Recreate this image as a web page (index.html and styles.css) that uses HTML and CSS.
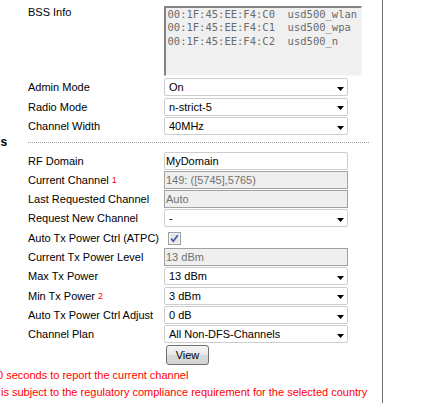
FILE: index.html
```html
<!DOCTYPE html>
<html>
<head>
<meta charset="utf-8">
<link rel="stylesheet" href="styles.css">
</head>
<body>
<div class="page">
  <div class="content">
    <div class="grid g1">
      <div class="lbl top">BSS Info</div>
      <div class="bss">00:1F:45:EE:F4:C0  usd500_wlan
00:1F:45:EE:F4:C1  usd500_wpa
00:1F:45:EE:F4:C2  usd500_n</div>
      <div class="lbl">Admin Mode</div>
      <div class="sel"><span>On</span><svg class="arr" width="7" height="4" viewBox="0 0 7 4"><path d="M0 0H7L3.5 4Z" fill="#000"/></svg></div>
      <div class="lbl">Radio Mode</div>
      <div class="sel"><span>n-strict-5</span><svg class="arr" width="7" height="4" viewBox="0 0 7 4"><path d="M0 0H7L3.5 4Z" fill="#000"/></svg></div>
      <div class="lbl">Channel Width</div>
      <div class="sel"><span>40MHz</span><svg class="arr" width="7" height="4" viewBox="0 0 7 4"><path d="M0 0H7L3.5 4Z" fill="#000"/></svg></div>
    </div>
    <div class="sep"><span class="sec">s</span><span class="dots"></span></div>
    <div class="grid g2">
      <div class="lbl">RF Domain</div>
      <div class="field">MyDomain</div>
      <div class="lbl">Current Channel <sup class="fn">1</sup></div>
      <div class="field dis">149: ([5745],5765)</div>
      <div class="lbl">Last Requested Channel</div>
      <div class="field dis">Auto</div>
      <div class="lbl">Request New Channel</div>
      <div class="sel"><span>-</span><svg class="arr" width="7" height="4" viewBox="0 0 7 4"><path d="M0 0H7L3.5 4Z" fill="#000"/></svg></div>
      <div class="lbl">Auto Tx Power Ctrl (ATPC)</div>
      <div class="cbcell"><svg class="cb" width="13" height="13" viewBox="0 0 13 13"><rect x="0.5" y="0.5" width="12" height="12" fill="#e6e7ea" stroke="#9d9fa3"/><rect x="1.5" y="1.5" width="10" height="10" fill="none" stroke="#f3f3f5"/><path d="M3.2 6.6L5.3 9.2L9.8 3.2" fill="none" stroke="#4559a6" stroke-width="1.7"/></svg></div>
      <div class="lbl">Current Tx Power Level</div>
      <div class="field dis">13 dBm</div>
      <div class="lbl">Max Tx Power</div>
      <div class="sel"><span>13 dBm</span><svg class="arr" width="7" height="4" viewBox="0 0 7 4"><path d="M0 0H7L3.5 4Z" fill="#000"/></svg></div>
      <div class="lbl">Min Tx Power <sup class="fn">2</sup></div>
      <div class="sel"><span>3 dBm</span><svg class="arr" width="7" height="4" viewBox="0 0 7 4"><path d="M0 0H7L3.5 4Z" fill="#000"/></svg></div>
      <div class="lbl">Auto Tx Power Ctrl Adjust</div>
      <div class="sel"><span>0 dB</span><svg class="arr" width="7" height="4" viewBox="0 0 7 4"><path d="M0 0H7L3.5 4Z" fill="#000"/></svg></div>
      <div class="lbl">Channel Plan</div>
      <div class="sel"><span>All Non-DFS-Channels</span><svg class="arr" width="7" height="4" viewBox="0 0 7 4"><path d="M0 0H7L3.5 4Z" fill="#000"/></svg></div>
      <div class="lbl"></div>
      <div class="btncell"><div class="btn">View</div></div>
    </div>
    <div class="notes">
      <p class="n1">0 seconds to report the current channel</p>
      <p class="n2">is subject to the regulatory compliance requirement for the selected country</p>
    </div>
  </div>
  <div class="rest"></div>
</div>
</body>
</html>
```
FILE: styles.css
```css
html, body {
  margin: 0;
  padding: 0;
  background: #fff;
}
body {
  font-family: "Liberation Sans", Arial, sans-serif;
  font-size: 11px;
  color: #000;
  overflow: hidden;
}
.page {
  display: flex;
  height: 403px;
  overflow: hidden;
}
.content {
  flex: none;
  width: 383px;
  height: 403px;
  box-sizing: border-box;
  border-right: 1px solid #6e6e6e;
  padding-top: 6px;
  overflow: hidden;
}
.rest {
  flex: 1;
}
.grid {
  display: grid;
  grid-template-columns: 136px auto;
  padding-left: 28px;
  justify-items: start;
}
.g1 {
  row-gap: 1.5px;
}
.g2 {
  row-gap: 1.33px;
}
.lbl {
  display: flex;
  align-items: center;
  height: 18px;
  white-space: nowrap;
}
.lbl.top {
  align-items: flex-start;
  height: auto;
  line-height: 13px;
}
.fn {
  color: #f00;
  font-size: 9px;
  vertical-align: 4px;
  line-height: 0;
  margin-left: 3px;
}
.bss {
  width: 198px;
  height: 70px;
  box-sizing: border-box;
  border-top: 2px solid #848484;
  border-left: 2px solid #848484;
  border-right: 1px solid #f8f8f8;
  border-bottom: 1px solid #f8f8f8;
  background: #f0f0f0;
  font-family: "DejaVu Sans Mono", monospace;
  font-size: 10.5px;
  line-height: 13.33px;
  color: #6b6b6b;
  white-space: pre;
  padding-left: 1.5px;
  margin-bottom: 0.5px;
  overflow: hidden;
}
.sel {
  width: 184px;
  height: 18px;
  box-sizing: border-box;
  border: 1px solid #cdcdcd;
  border-radius: 2px;
  background: #fff;
  display: flex;
  align-items: center;
  padding: 0 3px 0 4px;
  white-space: nowrap;
}
.sel span {
  flex: 1;
}
.arr {
  flex: none;
  margin-top: 3px;
}
.field {
  width: 184px;
  height: 18px;
  box-sizing: border-box;
  border: 1px solid #cdcdcd;
  border-radius: 2px;
  background: #fff;
  display: flex;
  align-items: center;
  padding-left: 1px;
  white-space: nowrap;
}
.field.dis {
  background: #efefef;
  border-color: #a2a2a2;
  border-radius: 0;
  color: #717171;
}
.cbcell {
  height: 18px;
  display: flex;
  align-items: center;
  padding-left: 4px;
}
.cb {
  margin-top: 2px;
}
.btncell {
  height: 20px;
  padding-left: 2px;
}
.btn {
  width: 43px;
  height: 20px;
  box-sizing: border-box;
  border: 1px solid #707070;
  border-radius: 3px;
  background: linear-gradient(#f4f4f4, #e8e8e8 50%, #d9d9d9 51%, #d3d3d3);
  display: flex;
  align-items: center;
  justify-content: center;
  margin-top: 0.5px;
}
.sep {
  display: flex;
  align-items: flex-start;
  height: 16.5px;
}
.sec {
  width: 28px;
  flex: none;
  font-weight: bold;
  font-size: 12px;
  line-height: 14px;
  padding-left: 0.5px;
  box-sizing: border-box;
}
.dots {
  flex: none;
  width: 341px;
  margin-top: 7px;
  border-top: 1px dotted #9a9a9a;
}
.notes {
  margin-top: 2px;
  color: #f00;
  line-height: 17px;
}
.notes p {
  margin: 0;
  white-space: nowrap;
}
.n1 {
  margin-left: -3px !important;
}
.n2 {
  margin-left: 1px !important;
}
```
